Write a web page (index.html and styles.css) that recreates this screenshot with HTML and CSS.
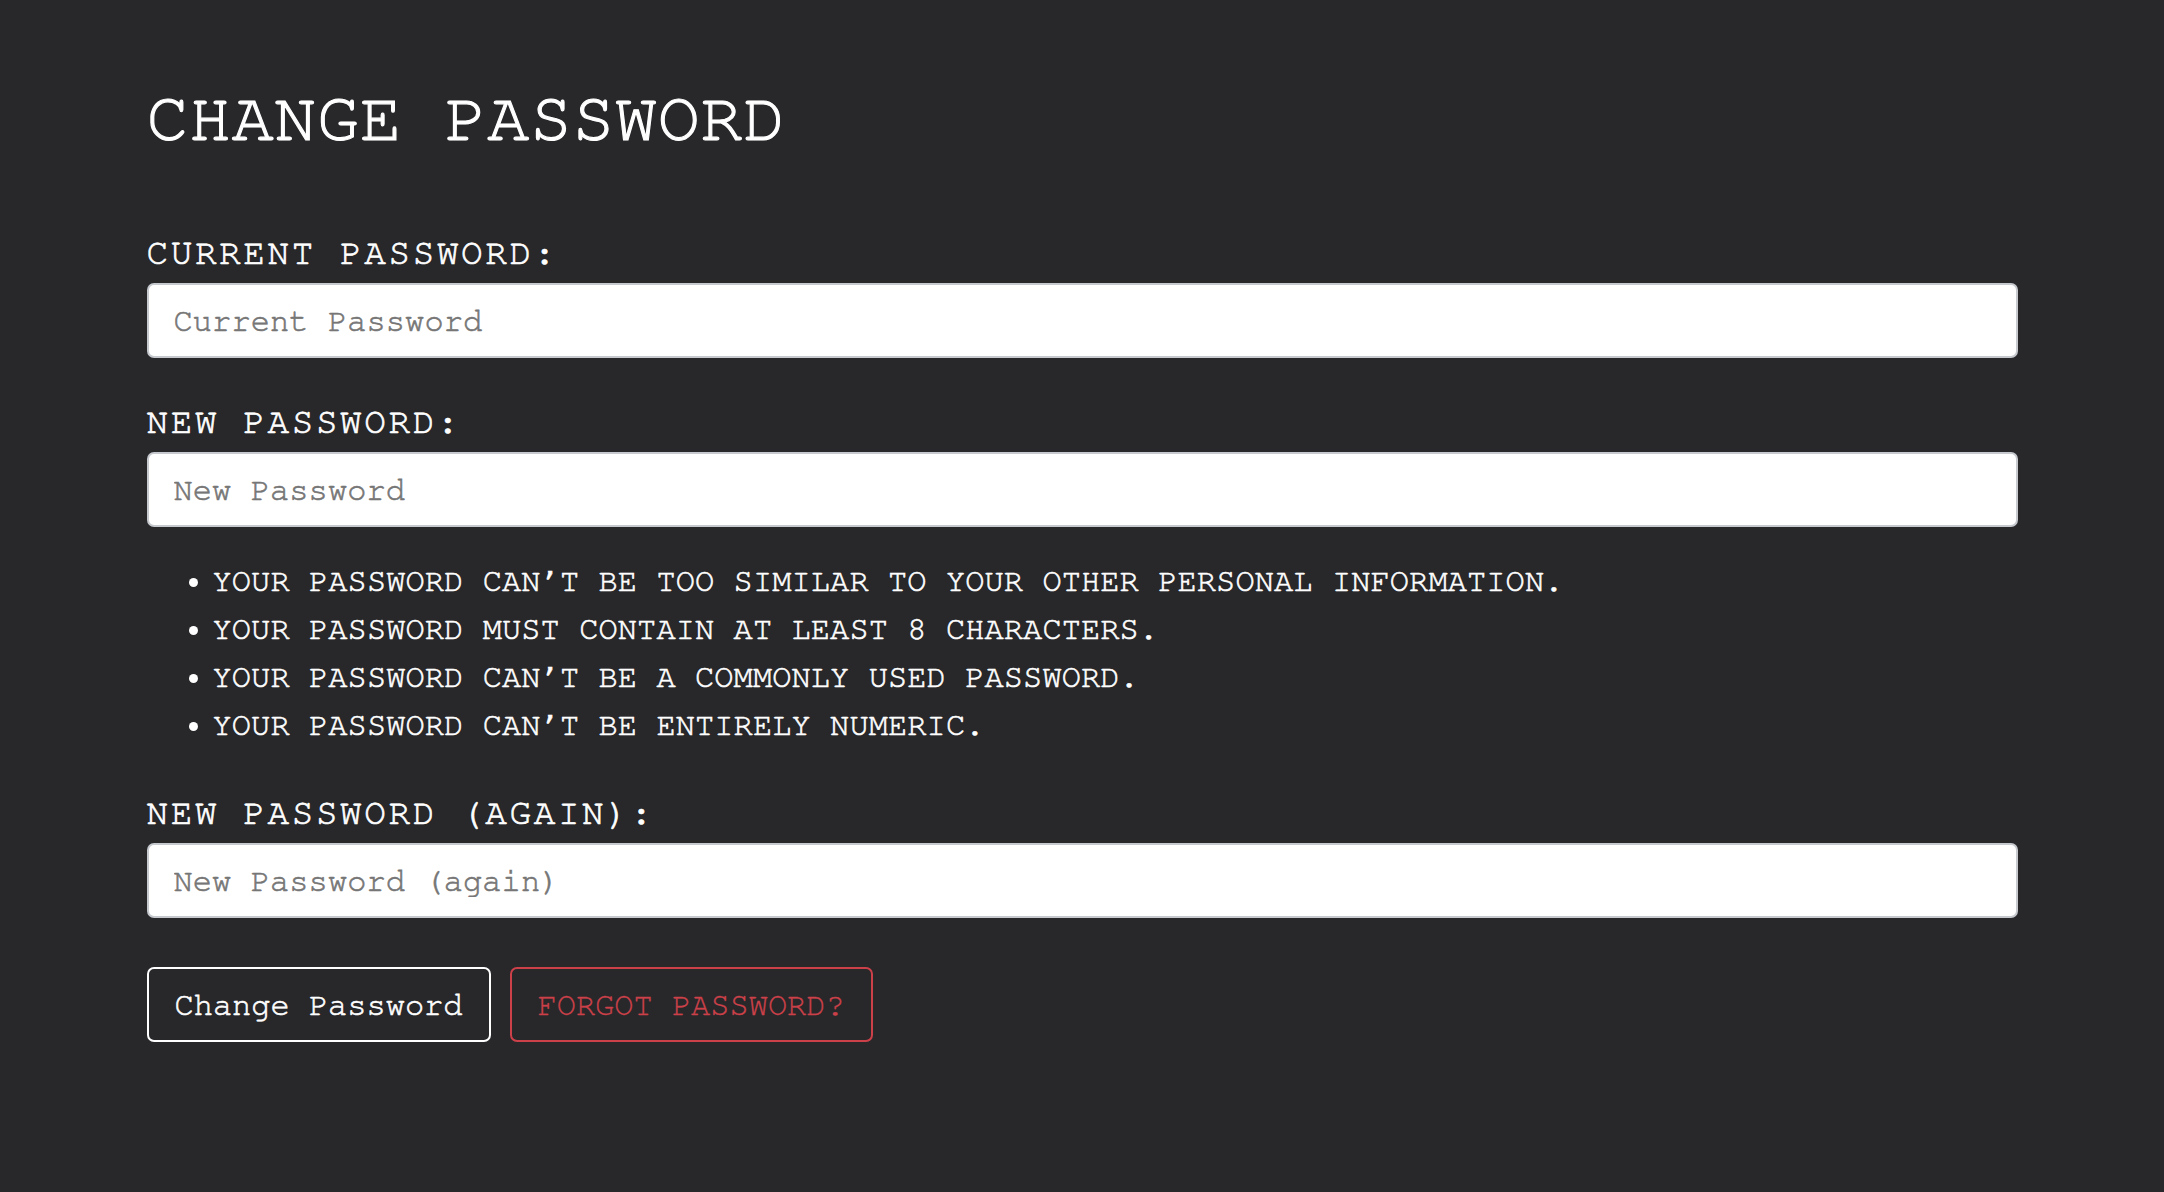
FILE: index.html
```html
<!DOCTYPE html>
<html lang="en">
<head>
<meta charset="utf-8">
<title>Change Password</title>
<link rel="stylesheet" href="styles.css">
</head>
<body>
<main class="container">
  <h1 class="title">Change Password</h1>
  <form class="form">
    <div class="field">
      <label class="label" for="old">Current Password:</label>
      <input class="input" id="old" type="password" placeholder="Current Password">
    </div>
    <div class="field">
      <label class="label" for="new1">New Password:</label>
      <input class="input" id="new1" type="password" placeholder="New Password">
      <ul class="help">
        <li>Your password can’t be too similar to your other personal information.</li>
        <li>Your password must contain at least 8 characters.</li>
        <li>Your password can’t be a commonly used password.</li>
        <li>Your password can’t be entirely numeric.</li>
      </ul>
    </div>
    <div class="field">
      <label class="label" for="new2">New Password (again):</label>
      <input class="input" id="new2" type="password" placeholder="New Password (again)">
    </div>
    <div class="actions">
      <button class="btn btn-light" type="button">Change Password</button>
      <a class="btn btn-danger" href="#">Forgot password?</a>
    </div>
  </form>
</main>
</body>
</html>
```

FILE: styles.css
```css
html, body {
  margin: 0;
  padding: 0;
}

body {
  background: #28282b;
  color: #ffffff;
  font-family: "Nimbus Mono PS", "Nimbus Mono L", "FreeMono", "Courier Prime", "Courier 10 Pitch", "Liberation Mono", monospace;
  min-height: 1192px;
  -webkit-text-stroke: 0.6px currentColor;
}

.container {
  max-width: 1871px;
  margin: 0 auto;
  padding-top: 77px;
}

.title {
  margin: 0 0 70px;
  font-size: 70px;
  line-height: 84px;
  font-weight: normal;
  letter-spacing: 0.6px;
  text-transform: uppercase;
  -webkit-text-stroke: 1.1px currentColor;
}

.form {
  display: flex;
  flex-direction: column;
}

.field {
  display: flex;
  flex-direction: column;
  margin-bottom: 42px;
}

.label {
  display: block;
  font-size: 36px;
  line-height: 44px;
  letter-spacing: 2.6px;
  text-transform: uppercase;
  margin-bottom: 8px;
  -webkit-text-stroke: 0.7px currentColor;
}

.input {
  box-sizing: border-box;
  width: 100%;
  height: 75px;
  margin: 0;
  padding: 0 25px;
  border: 2px solid #c6cacf;
  border-radius: 7px;
  background: #ffffff;
  color: #333;
  font-family: inherit;
  font-size: 32px;
  letter-spacing: 0.1px;
  outline: none;
}

.input::placeholder {
  color: #767676;
  opacity: 1;
}

.help {
  margin: 30px 0 0;
  padding-left: 66px;
  font-size: 32px;
  line-height: 48px;
  letter-spacing: 0.1px;
  text-transform: uppercase;
}

.actions {
  display: flex;
  gap: 19px;
  margin-top: 7px;
}

.btn {
  box-sizing: border-box;
  display: inline-flex;
  align-items: center;
  height: 75px;
  padding: 0 26px;
  border: 2px solid #ffffff;
  border-radius: 7px;
  background: transparent;
  color: #ffffff;
  font-family: inherit;
  font-size: 32px;
  text-decoration: none;
  cursor: pointer;
}

.btn-danger {
  border-color: #cc4149;
  color: #cc4149;
  text-transform: uppercase;
  -webkit-text-stroke: 0.3px currentColor;
}
```
